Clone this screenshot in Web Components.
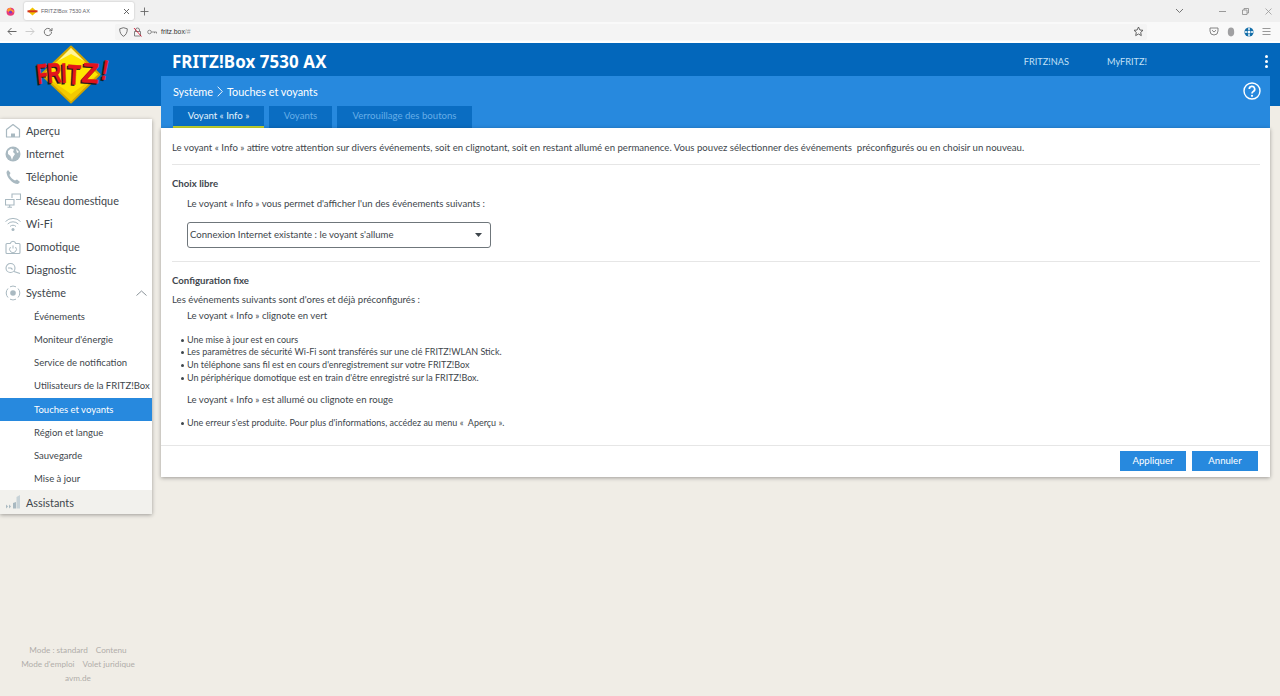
<!DOCTYPE html>
<html lang="fr">
<head>
<meta charset="utf-8">
<title>FRITZ!Box 7530 AX</title>
<style>
html,body{margin:0;height:100%;background:#f0ede6;}
body{font-family:Lato,"Noto Sans",sans-serif;color:#3e464c;overflow:hidden;}
</style>
</head>
<body>
<browser-bar></browser-bar>
<fritz-app>
  <fritz-logo slot="logo"></fritz-logo>
  <side-nav slot="nav"></side-nav>
  <foot-links slot="foot"></foot-links>
  <top-head slot="head"></top-head>
  <page-head slot="sub"></page-head>
  <info-card slot="card"></info-card>
</fritz-app>
<script>
class BaseEl extends HTMLElement{
  constructor(){
    super();
    this.attachShadow({mode:'open'});
  }
  connectedCallback(){
    const t=document.createElement('template');
    t.innerHTML=`<style>${this.getStyles()}</style>${this.getMarkup()}`;
    this.shadowRoot.appendChild(t.content.cloneNode(true));
  }
}

class BrowserBar extends BaseEl{
  getStyles(){return `
    :host{display:block;height:43px;font-family:"Liberation Sans",sans-serif;}
    svg{display:block;flex:none;}
    .strip{height:22px;background:#f0f0f0;display:flex;align-items:center;}
    .fox{margin-left:6px;}
    .tab{margin-left:9px;width:110px;height:18px;background:#fff;border-radius:2px;box-shadow:0 0 2px rgba(0,0,0,.25);display:flex;align-items:center;box-sizing:border-box;padding:0 4px 0 3px;font-size:5.500px;color:#66666c;}
    .tab span{flex:1;margin-left:3px;}
    .plus{margin-left:6px;}
    .wins{margin-left:auto;display:flex;align-items:center;}
    .tools{height:19px;background:#f9f9f9;display:flex;align-items:center;}
    .url{margin-left:62px;width:1032px;height:16px;background:#f4f4f4;border-radius:2px;display:flex;align-items:center;font-size:6.800px;color:#333;box-sizing:border-box;padding-left:4px;}
    .url b{font-weight:400;color:#333;}
    .url i{font-style:normal;color:#999;}
    .line{height:2px;background:#fff;}
  `;}
  getMarkup(){return `
    <div class="strip">
      <svg class="fox" width="9" height="9" viewBox="0 0 10 10"><circle cx="5" cy="5.2" r="4.4" fill="#e8397a"/><path d="M1 4C1.500 1.500 4 .4 6 .8 4.800 1.500 5 2.400 6.500 2.800 8.500 3.200 9 5 8.800 6.500L6 4.500 3 5.500z" fill="#ff9a2e"/><circle cx="5" cy="5.600" r="1.700" fill="#7a3fc0"/></svg>
      <div class="tab">
        <svg width="11" height="9" viewBox="0 0 11 9"><path d="M5.500 .5 10 4.500 5.500 8.500 1 4.500z" fill="#f2c200"/><path d="M.5 3.300h10v2H.5z" fill="#d3331f"/></svg>
        <span>FRITZ!Box 7530 AX</span>
        <svg width="7" height="7" viewBox="0 0 7 7"><path d="M1 1 6 6M6 1 1 6" stroke="#555" stroke-width=".9"/></svg>
      </div>
      <svg class="plus" width="9" height="9" viewBox="0 0 9 9"><path d="M4.500 .5v8M.5 4.500h8" stroke="#666" stroke-width=".9"/></svg>
      <div class="wins">
        <svg width="9" height="6" viewBox="0 0 9 6"><path d="M1 1 4.500 4.500 8 1" fill="none" stroke="#666" stroke-width=".9"/></svg>
        <svg style="margin-left:35px" width="7" height="7" viewBox="0 0 7 7"><path d="M0 3.500h7" stroke="#999"/></svg>
        <svg style="margin-left:16px" width="7" height="7" viewBox="0 0 7 7"><path d="M.5 2h4.500v4.500H.5zM2 2V.5h4.500V5H5" fill="none" stroke="#888" stroke-width=".8"/></svg>
        <svg style="margin:0 8px 0 16px" width="7" height="7" viewBox="0 0 7 7"><path d="M.5 .5 6.500 6.500M6.500 .5 .5 6.500" stroke="#999" stroke-width=".8"/></svg>
      </div>
    </div>
    <div class="tools">
      <svg style="margin-left:7px" width="10" height="9" viewBox="0 0 10 9"><path d="M9.500 4.500H1M4.500 1 1 4.500 4.500 8" fill="none" stroke="#666" stroke-width="1"/></svg>
      <svg style="margin-left:8px" width="10" height="9" viewBox="0 0 10 9"><path d="M.5 4.500H9M5.500 1 9 4.500 5.500 8" fill="none" stroke="#ccc" stroke-width="1"/></svg>
      <svg style="margin-left:8px" width="10" height="10" viewBox="0 0 10 10"><path d="M8.500 5A3.600 3.600 0 1 1 7.400 2.400L9 3.800M9 1v2.800H6.200" fill="none" stroke="#666" stroke-width=".9"/></svg>
      <div class="url">
        <svg width="9" height="10" viewBox="0 0 9 10"><path d="M4.500 .7 8.300 1.800C8.300 5.500 7 8 4.500 9.300 2 8 .7 5.500.7 1.800z" fill="none" stroke="#666" stroke-width=".9"/></svg>
        <svg style="margin-left:5px" width="9" height="10" viewBox="0 0 9 10"><path d="M2.500 4.500V3a2 2 0 0 1 4 0v1.500M1.500 4.500h6v4.500h-6z" fill="none" stroke="#777" stroke-width=".9"/><path d="M1 1 8.500 9.500" stroke="#d70022" stroke-width=".8"/></svg>
        <svg style="margin-left:5px" width="10" height="6" viewBox="0 0 10 6"><circle cx="2.500" cy="3" r="1.800" fill="none" stroke="#777" stroke-width=".8"/><path d="M4.300 3H9.500V4.500M7.500 3V4.200" fill="none" stroke="#777" stroke-width=".8"/></svg>
        <div style="margin-left:4px"><b>fritz.box</b><i>/#</i></div>
        <svg style="margin-left:auto;margin-right:3px" width="11" height="11" viewBox="0 0 11 11"><path d="M5.500 1 6.900 4 10 4.300 7.700 6.400 8.300 9.600 5.500 8 2.700 9.600 3.300 6.400 1 4.300 4.100 4z" fill="none" stroke="#555" stroke-width=".9"/></svg>
      </div>
      <svg style="margin-left:62px" width="10" height="9" viewBox="0 0 10 9"><path d="M1 1h8v3a4 4 0 0 1-8 0zM3 3.200 5 5 7 3.200" fill="none" stroke="#777" stroke-width=".9"/></svg>
      <svg style="margin-left:8px" width="8" height="10" viewBox="0 0 8 10"><ellipse cx="4" cy="5" rx="3.200" ry="4.400" fill="#a0a0a2"/></svg>
      <svg style="margin-left:9px" width="10" height="10" viewBox="0 0 10 10"><circle cx="5" cy="5" r="4.600" fill="#126da8"/><circle cx="5" cy="5" r="1.500" fill="#fff"/><path d="M5 .8V3M5 7v2.200M.8 5H3M7 5h2.200" stroke="#fff" stroke-width="1.400"/></svg>
      <svg style="margin-left:8px" width="9" height="9" viewBox="0 0 9 9"><path d="M.5 1.500h8M.5 4.500h8M.5 7.500h8" stroke="#999" stroke-width="1"/></svg>
    </div>
    <div class="line"></div>
  `;}
}

class FritzApp extends BaseEl{
  getStyles(){return `
    :host{display:grid;grid-template-columns:161px 1fr;height:653px;box-sizing:border-box;padding-right:10px;
      background:linear-gradient(#0367bb 63px,#f0ede6 63px);}
    .left{display:flex;flex-direction:column;height:653px;}
    .right{display:flex;flex-direction:column;min-width:0;}
    .foot{margin-top:auto;}
  `;}
  getMarkup(){return `
    <div class="left"><slot name="logo"></slot><slot name="nav"></slot><div class="foot"><slot name="foot"></slot></div></div>
    <div class="right"><slot name="head"></slot><slot name="sub"></slot><slot name="card"></slot></div>
  `;}
}

class FritzLogo extends BaseEl{
  getStyles(){return `
    :host{display:block;height:76px;}
    svg{display:block;overflow:visible;}
    text{font-family:"Liberation Sans",sans-serif;font-weight:700;font-size:28px;}
  `;}
  getMarkup(){
    const letters=[['F',38,84,-6,.62],['R',48,83,-4,.7],['I',61.500,83,-2,.72],['T',67,84,3,.78],['Z',81,82,4,1.02],['!',100,79,10,.72]];
    const draw=(dx,dy,fill)=>letters.map(l=>`<text fill="${fill}" stroke="${fill}" stroke-width=".5" transform="translate(${l[1]+dx} ${l[2]-43+dy}) rotate(${l[3]}) scale(${l[4]} 1)">${l[0]}</text>`).join('');
    return `
    <svg width="161" height="63" viewBox="0 0 161 63">
      <path d="M71 3.500 99.500 31.500 71 59.500 41.500 31.500z" fill="#ffe500" stroke="#d0a400" stroke-width="2" stroke-linejoin="round"/>
      <path d="M71 5 84 18 71 11 58 18z" fill="#fff59a"/>
      <path d="M71 58.500 98 31.500 71 51 43 31.500z" fill="#f0bf00" opacity=".75"/>
      ${draw(-1.200,1.200,'#1a1a1a')}
      ${draw(0,0,'#e3131b')}
    </svg>
  `;}
}

const NAV_ICONS={
  home:'<path d="M1.500 6.500 8 1.500 14.500 6.500V14H1.500z" fill="none" stroke="#a9b9c1" stroke-width="1.200" stroke-linejoin="round"/><path d="M6 14V10.500h4V14z" fill="#a9b9c1"/>',
  globe:'<circle cx="8" cy="8" r="7.500" fill="#a9b9c1"/><path d="M3 5 6 2.500 9 3.500 8 6 10 8 8 11 7 14 5.500 10 3 8zM11 3 14 6 12 7z" fill="#fff"/>',
  phone:'<path d="M3 1 5.500 4 4.500 6C5.500 8.500 7.500 10.500 10 11.500L12 10.500 15 13 13 15C7.500 15 1.500 8.500 1.500 3z" fill="#a9b9c1"/>',
  net:'<path d="M.5 7.500h8.500v5.500H.5zM4.700 13v2M2.500 15.200h4.500M7 6V2h8.500v5.500H11" fill="none" stroke="#a9b9c1" stroke-width="1.100"/>',
  wifi:'<path d="M.5 5.500a10.600 10.600 0 0 1 15 0M2.700 8a7.500 7.500 0 0 1 10.600 0M5 10.500a4.200 4.200 0 0 1 6 0" fill="none" stroke="#a9b9c1" stroke-width="1"/><circle cx="8" cy="13.500" r="1.500" fill="#a9b9c1"/>',
  plug:'<path d="M2 4.500H5.200C5.800 3 6.800 2.300 8 2.300S10.200 3 10.800 4.500H14Q15 4.500 15 5.500V13.500Q15 14.500 14 14.500H2Q1 14.500 1 13.500V5.500Q1 4.500 2 4.500z" fill="none" stroke="#a9b9c1" stroke-width="1.100"/><path d="M8 6.500V9.500M5.500 8a3.400 3.400 0 1 0 5 0" fill="none" stroke="#a9b9c1" stroke-width="1"/>',
  diag:'<circle cx="5.500" cy="6" r="4.500" fill="none" stroke="#a9b9c1" stroke-width="1.100"/><path d="M3 6h3l1.500 1.500M9 9.500 15 11.500" fill="none" stroke="#a9b9c1" stroke-width="1.200"/>',
  sys:'<circle cx="8" cy="8" r="2.800" fill="#a9b9c1"/><path d="M3 3.500a6.500 6.500 0 0 0 0 9M13 3.500a6.500 6.500 0 0 1 0 9M5 1.800a6.500 6.500 0 0 1 6 0M5 14.200a6.500 6.500 0 0 0 6 0" fill="none" stroke="#a9b9c1" stroke-width="1"/>',
  wiz:'<path d="M1 10.500 3 12.500 1 14.500zM4 10.500 6 12.500 4 14.500z M8 9 11 8V14.500H8z" fill="#a9b9c1"/><path d="M11.500 14.500V3L15 1V14.500z" fill="#c8d3d8"/>'
};

class NavItem extends BaseEl{
  getStyles(){return `
    :host{display:flex;align-items:center;height:23.2px;font-size:10.850px;white-space:nowrap;color:#3e464c;}
    svg{width:16px;height:16px;margin:0 5px 0 5px;flex:none;}
    .t{flex:1;padding-bottom:.6px;}
    :host([sub]){font-size:9.500px;padding-left:34px;}
    :host([sub]) .t{padding-bottom:0;}
    :host([active]){background:#2789de;color:#fff;}
    :host([foot]){height:24px;background:#f2f1ed;}
    svg.chev{width:11px;height:6px;margin:0 5px 0 0;}
  `;}
  getMarkup(){
    const ic=this.getAttribute('icon');
    return `${ic?`<svg viewBox="0 0 16 16">${NAV_ICONS[ic]}</svg>`:''}<span class="t"><slot></slot></span>${this.hasAttribute('open')?'<svg class="chev" viewBox="0 0 11 6"><path d="M.5 5.500 5.500 1 10.500 5.500" fill="none" stroke="#7d878d" stroke-width=".9"/></svg>':''}`;
  }
}

class SideNav extends BaseEl{
  getStyles(){return `
    :host{display:block;width:152px;background:#fff;box-shadow:0 1px 4px rgba(0,0,0,.35);margin-top:.3px;}
  `;}
  getMarkup(){return `
    <nav-item icon="home">Aperçu</nav-item>
    <nav-item icon="globe">Internet</nav-item>
    <nav-item icon="phone">Téléphonie</nav-item>
    <nav-item icon="net">Réseau domestique</nav-item>
    <nav-item icon="wifi">Wi-Fi</nav-item>
    <nav-item icon="plug">Domotique</nav-item>
    <nav-item icon="diag">Diagnostic</nav-item>
    <nav-item icon="sys" open>Système</nav-item>
    <nav-item sub>Événements</nav-item>
    <nav-item sub>Moniteur d'énergie</nav-item>
    <nav-item sub>Service de notification</nav-item>
    <nav-item sub>Utilisateurs de la FRITZ!Box</nav-item>
    <nav-item sub active>Touches et voyants</nav-item>
    <nav-item sub>Région et langue</nav-item>
    <nav-item sub>Sauvegarde</nav-item>
    <nav-item sub>Mise à jour</nav-item>
    <nav-item icon="wiz" foot>Assistants</nav-item>
  `;}
}

class FootLinks extends BaseEl{
  getStyles(){return `
    :host{display:block;width:156px;padding-bottom:11px;font-size:8.200px;line-height:14px;color:#b0aeaa;text-align:center;}
    span{margin:0 4px;}
  `;}
  getMarkup(){return `
    <div><span>Mode : standard</span><span>Contenu</span></div>
    <div><span>Mode d'emploi</span><span>Volet juridique</span></div>
    <div><span>avm.de</span></div>
  `;}
}

class TopHead extends BaseEl{
  getStyles(){return `
    :host{display:flex;align-items:center;height:33px;padding:3px 0 0 11px;box-sizing:border-box;color:#fff;margin-right:-10px;}
    h1{margin:0;font-family:"Noto Sans",sans-serif;font-size:16.900px;font-weight:700;letter-spacing:.1px;}
    a{font-size:9.200px;color:#c2e0f6;margin-left:38px;padding-top:1px;}
    a:first-of-type{margin-left:auto;}
    .more{width:4px;margin:0 11px 0 118px;}
    .more i{display:block;width:3px;height:3px;border-radius:50%;background:#fff;margin:2px 0;}
  `;}
  getMarkup(){return `
    <h1>FRITZ!Box 7530 AX</h1>
    <a>FRITZ!NAS</a><a>MyFRITZ!</a>
    <div class="more"><i></i><i></i><i></i></div>
  `;}
}

class PageHead extends BaseEl{
  getStyles(){return `
    :host{display:block;height:52px;background:#2789de;color:#fff;box-sizing:border-box;padding:0 9px 0 12px;}
    .crumb{display:flex;align-items:center;height:30px;font-size:10.850px;}
    .crumb svg{margin:0 4px;}
    .crumb svg.help{margin:-1px 0 0 auto;}
    .tabs{display:flex;gap:5px;}
    .tabs div{height:22px;box-sizing:border-box;background:#0a6dc2;color:#66aee8;font-size:9.600px;display:flex;align-items:center;justify-content:center;padding-bottom:4px;}
    .tabs .on{color:#e6f3fc;border-bottom:2px solid #c2d22e;padding-bottom:2px;}
  `;}
  getMarkup(){return `
    <div class="crumb"><span>Système</span>
      <svg width="6" height="11" viewBox="0 0 6 11"><path d="M.7 .7 5.300 5.500.7 10.300" fill="none" stroke="#fff" stroke-width=".9"/></svg>
      <span>Touches et voyants</span>
      <svg class="help" width="18" height="18" viewBox="0 0 18 18"><circle cx="9" cy="9" r="8" fill="none" stroke="#fff" stroke-width="1.400"/><path d="M6.300 7A2.700 2.700 0 1 1 10.300 9.400C9.300 10 9 10.400 9 11.500" fill="none" stroke="#fff" stroke-width="1.700"/><circle cx="9" cy="13.800" r="1.100" fill="#fff"/></svg>
    </div>
    <div class="tabs"><div class="on" style="width:91px">Voyant « Info »</div><div style="width:63px">Voyants</div><div style="width:135px">Verrouillage des boutons</div></div>
  `;}
}

class InfoCard extends BaseEl{
  getStyles(){return `
    :host{display:block;background:#fff;box-shadow:0 1px 4px rgba(0,0,0,.35);font-size:9.600px;line-height:16px;color:#3e464c;}
    .in{padding:12px 10px 0 11px;}
    p,h3{margin:0;white-space:nowrap;}
    hr{border:0;height:1px;background:#e6e6e6;margin:0;}
    h3{font-weight:700;font-size:9.650px;}
    .ind{padding-left:15px;}
    .sel{margin-left:15px;width:304px;height:26px;box-sizing:border-box;border:1px solid #6f767b;border-radius:3px;display:flex;align-items:center;padding:0 8px 0 2px;}
    .sel svg{margin-left:auto;}
    ul{margin:0;padding:0 0 0 15px;list-style:none;line-height:12.670px;font-size:9px;}
    li{position:relative;white-space:nowrap;}
    li::before{content:"";position:absolute;left:-6px;top:5px;width:3px;height:3px;border-radius:50%;background:#3e464c;}
    .foot{display:flex;justify-content:flex-end;gap:6px;padding:5px 12px 6px 0;border-top:1px solid #e6e6e6;margin-top:15.600px;}
    .btn{width:66px;height:20px;background:#2789de;color:#fff;display:flex;align-items:center;justify-content:center;padding-top:1px;box-sizing:border-box;}
  `;}
  getMarkup(){return `
    <div class="in">
      <p>Le voyant « Info » attire votre attention sur divers événements, soit en clignotant, soit en restant allumé en permanence. Vous pouvez sélectionner des événements &nbsp;préconfigurés ou en choisir un nouveau.</p>
      <hr style="margin-top:8px">
      <h3 style="margin-top:10px">Choix libre</h3>
      <p class="ind" style="margin-top:5px">Le voyant « Info » vous permet d'afficher l'un des événements suivants :</p>
      <div class="sel" style="margin-top:10px">Connexion Internet existante : le voyant s'allume
        <svg width="7" height="4" viewBox="0 0 7 4"><path d="M0 0h7L3.500 4z" fill="#3e464c"/></svg>
      </div>
      <hr style="margin-top:13px">
      <h3 style="margin-top:10px">Configuration fixe</h3>
      <p style="margin-top:4px">Les événements suivants sont d'ores et déjà préconfigurés :</p>
      <p class="ind">Le voyant « Info » clignote en vert</p>
      <ul style="margin-top:9.700px">
        <li>Une mise à jour est en cours</li>
        <li>Les paramètres de sécurité Wi-Fi sont transférés sur une clé FRITZ!WLAN Stick.</li>
        <li>Un téléphone sans fil est en cours d'enregistrement sur votre FRITZ!Box</li>
        <li>Un périphérique domotique est en train d'être enregistré sur la FRITZ!Box.</li>
      </ul>
      <p class="ind" style="margin-top:7.600px">Le voyant « Info » est allumé ou clignote en rouge</p>
      <ul style="margin-top:8.700px">
        <li>Une erreur s'est produite. Pour plus d'informations, accédez au menu « &nbsp;Aperçu ».</li>
      </ul>
    </div>
    <div class="foot"><div class="btn">Appliquer</div><div class="btn">Annuler</div></div>
  `;}
}

customElements.define('browser-bar',BrowserBar);
customElements.define('fritz-app',FritzApp);
customElements.define('fritz-logo',FritzLogo);
customElements.define('nav-item',NavItem);
customElements.define('side-nav',SideNav);
customElements.define('foot-links',FootLinks);
customElements.define('top-head',TopHead);
customElements.define('page-head',PageHead);
customElements.define('info-card',InfoCard);
</script>
</body>
</html>
